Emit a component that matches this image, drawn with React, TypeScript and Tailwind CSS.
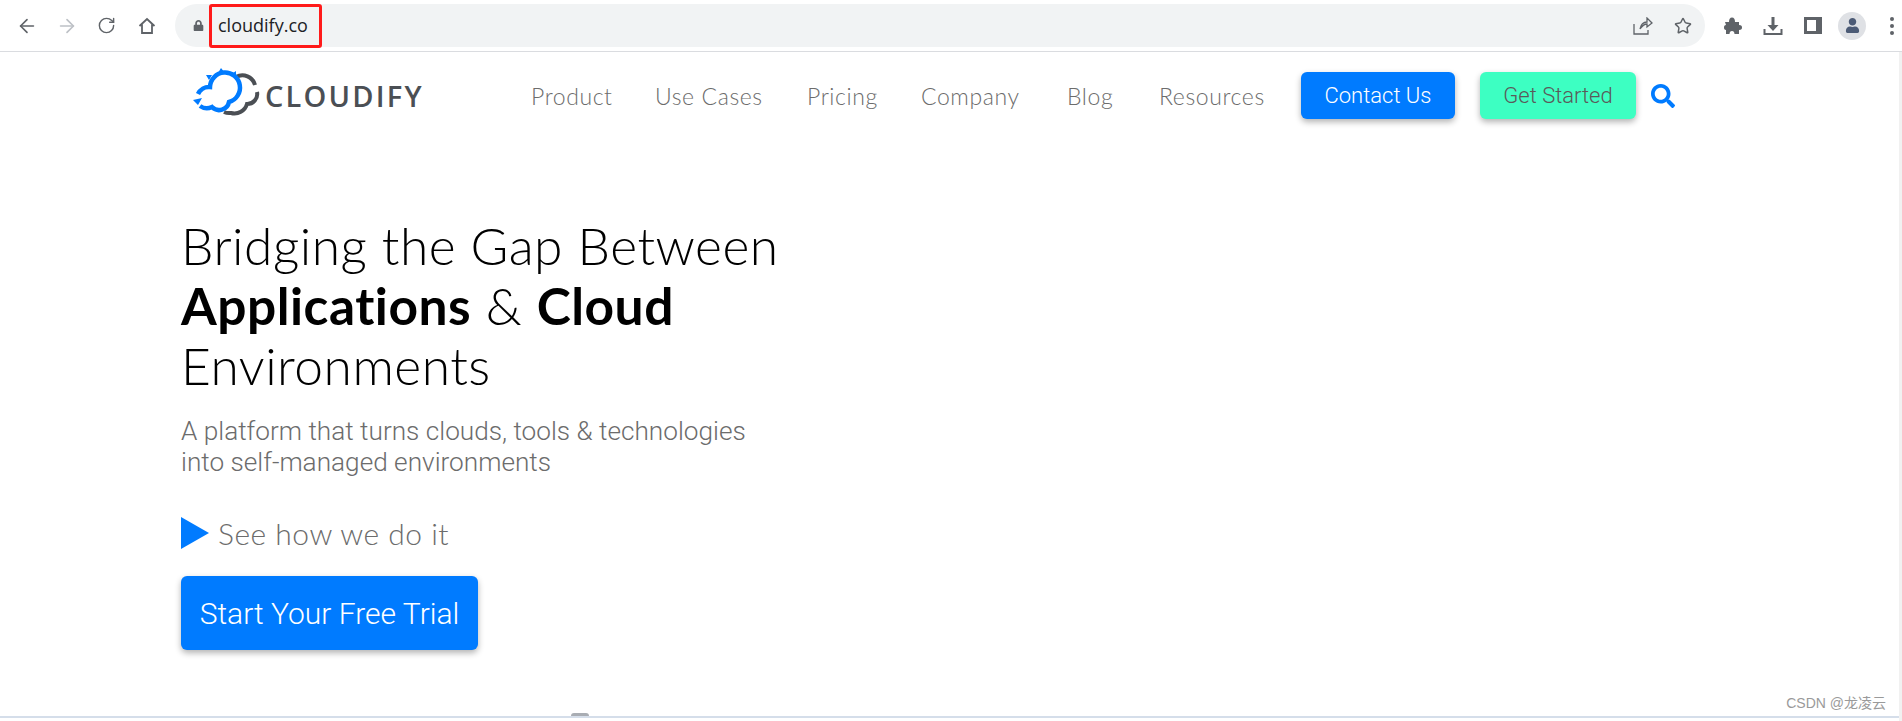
import { ArrowLeft, ArrowRight, RotateCw, Star } from 'lucide-react'
import { FaLock, FaSearch, FaUser } from 'react-icons/fa'

const navItems = [
  { label: 'Product', width: 'w-[79px]' },
  { label: 'Use Cases', width: 'w-[107px]' },
  { label: 'Pricing', width: 'w-[69px]' },
  { label: 'Company', width: 'w-[101px]' },
  { label: 'Blog', width: 'w-[47px]' },
  { label: 'Resources', width: 'w-[106px]' },
]

function Logo() {
  return (
    <div className="flex items-center">
      <svg width="68" height="50" viewBox="0 0 68 50" fill="none" className="shrink-0">
        <path d="M43 9 A13 13 0 0 1 62 17 M64 24 A10 10 0 0 1 54 36 A13 13 0 0 1 38 45 A13 13 0 0 1 31 44" stroke="#4b4f54" strokeWidth="4" />
        <path
          d="M5 26 A12 12 0 0 1 17 19 A15 15 0 1 1 36 34 A10 10 0 0 1 19 39 A12 12 0 0 1 7 38"
          stroke="#007bff"
          strokeWidth="4.500"
        />
        <path d="M25 5 l3 -5 l4 5z M37 7 l6 -4 l0 6z M16 12 l-3 -5 l6 0z M0 32 l9 -2 l-4 7z" fill="#007bff" />
      </svg>
      <span className="mt-[5px] ml-[4px] font-['Open_Sans',sans-serif] text-[29px] leading-none font-semibold tracking-[2.2px] text-[#4b4f54]">
        CLOUDIFY
      </span>
    </div>
  )
}

function BrowserBar() {
  return (
    <div className="flex h-[52px] items-start border-b border-[#dadce0] bg-white pt-1 text-[#5f6368]">
      <div className="flex h-[43px] items-center pl-[16px]">
        <ArrowLeft size={22} strokeWidth={1.8} />
        <ArrowRight size={22} strokeWidth={1.8} className="ml-[18px] text-[#bdc1c6]" />
        <RotateCw size={19} strokeWidth={1.8} className="ml-[19px]" />
        <svg width="18" height="18" viewBox="0 0 18 18" fill="none" stroke="currentColor" strokeWidth="1.8" className="ml-[22px]">
          <path d="M1.500 9 L9 2 L16.500 9 M4 7.500 V16 H14 V7.500" />
        </svg>
      </div>
      <div className="ml-[19px] flex h-[43px] w-[1530px] items-center rounded-full bg-[#f1f3f4] pl-[18px]">
        <FaLock size={11} />
        <div className="ml-[5px] flex h-[44px] w-[113px] items-center rounded-[3px] border-[3px] border-[#ff1a1a] pl-[6px] font-['Open_Sans',sans-serif] text-[18px] text-[#202124]">
          cloudify.co
        </div>
        <div className="ml-auto flex items-center gap-[21px] pr-[13px]">
          <svg width="20" height="18" viewBox="0 0 20 18" fill="none" stroke="currentColor" strokeWidth="1.3">
            <path d="M1 7 V17 H15 V13 M7 12 C8 7 11 5 14 5 V1 L19 6 L14 10 V7 C11 7 9 9 7 12Z" />
          </svg>
          <Star size={18} strokeWidth={2} />
        </div>
      </div>
      <div className="flex h-[43px] items-center pl-[19px]">
        <svg width="18" height="18" viewBox="0 0 18 18" fill="currentColor">
          <path d="M1 5 H5 C5 2 6 0.500 8 0.500 C10 0.500 11 2 11 5 H15 V8 C17.500 8 18 9 18 10.500 C18 12 17.500 13 15 13 V17 H10.500 C10.500 15 9.500 14 8 14 C6.500 14 5.500 15 5.500 17 H2 V13 C0.500 13 0 12 0 10.500 C0 9 0.500 8 2 8 Z" />
        </svg>
        <svg width="20" height="20" viewBox="0 0 20 20" fill="currentColor" className="ml-[21px]">
          <path d="M8.500 1 h3 v8 h4 L10 15 L4.500 9 h4z M0.500 13 h2 v4 h15 v-4 h2 v6 h-19z" />
        </svg>
        <div className="ml-[21px] flex h-[17px] w-[18px] justify-end border-[3px] border-r-0 border-[#5f6368] bg-white">
          <div className="h-full w-[6px] bg-[#5f6368]" />
        </div>
        <div className="ml-[16px] flex h-7 w-7 items-center justify-center rounded-full bg-[#dfe1e5] text-[#4c5b76]">
          <FaUser size={15} />
        </div>
        <div className="ml-[24px] flex flex-col gap-[3px]">
          <div className="h-[4px] w-[4px] rounded-full bg-[#5f6368]" />
          <div className="h-[4px] w-[4px] rounded-full bg-[#5f6368]" />
          <div className="h-[4px] w-[4px] rounded-full bg-[#5f6368]" />
        </div>
      </div>
    </div>
  )
}

function Header() {
  return (
    <header className="flex h-[68px] items-start pt-5">
      <div className="ml-[193px] w-[338px] -mt-[4px]">
        <Logo />
      </div>
      <nav className="flex gap-[45px] pt-[9px]">
        {navItems.map((item) => (
          <a
            key={item.label}
            className={`${item.width} whitespace-nowrap font-['Lato',sans-serif] text-[23px] leading-[30px] font-light tracking-[0.6px] text-[#6c6c6c]`}
          >
            {item.label}
          </a>
        ))}
      </nav>
      <button className="ml-[36px] h-[47px] w-[154px] rounded-md bg-[#007bff] font-['Roboto',sans-serif] text-[22px] font-light text-white shadow-[0_3px_6px_rgba(0,0,0,0.3)]">
        Contact Us
      </button>
      <button className="ml-[25px] h-[47px] w-[156px] rounded-md bg-[#3dffc2] font-['Roboto',sans-serif] text-[22px] font-light text-[#5a5a5a] shadow-[0_3px_6px_rgba(0,0,0,0.3)]">
        Get Started
      </button>
      <FaSearch size={24} className="mt-[12px] ml-[15px] text-[#007bff]" />
    </header>
  )
}

function Hero() {
  return (
    <section className="pt-[95px] pl-[181px]">
      <h1 className="font-['Lato',sans-serif] text-[51.5px] leading-[60px] font-light tracking-[0.5px] text-black">
        Bridging the Gap Between
        <br />
        <strong className="font-bold">Applications</strong> &amp; <strong className="font-bold">Cloud</strong>
        <br />
        Environments
      </h1>
      <p className="mt-[21px] font-['Roboto',sans-serif] text-[26.2px] leading-[31px] font-light text-[#6c6c6c]">
        A platform that turns clouds, tools &amp; technologies
        <br />
        into self-managed environments
      </p>
      <div className="mt-[35px] flex items-center">
        <svg width="28" height="32" viewBox="0 0 28 32" fill="#007bff">
          <path d="M0 0 L28 16 L0 32Z" />
        </svg>
        <span className="ml-[9px] font-['Lato',sans-serif] text-[30px] leading-[40px] font-light tracking-[0.5px] text-[#6c6c6c]">
          See how we do it
        </span>
      </div>
      <button className="mt-[23px] h-[74px] w-[297px] rounded-md bg-[#007bff] font-['Roboto',sans-serif] text-[30px] font-light text-white shadow-[0_3px_6px_rgba(0,0,0,0.3)]">
        Start Your Free Trial
      </button>
    </section>
  )
}

export default function App() {
  return (
    <div className="flex h-[721px] w-full flex-col overflow-hidden bg-white">
      <BrowserBar />
      <div className="flex min-h-0 flex-1">
        <div className="relative mb-[3px] flex min-w-0 flex-1 flex-col border-b-2 border-[#d5deea]">
          <Header />
          <Hero />
          <div className="mt-auto flex justify-end pr-[13px] pb-[4px] font-['Liberation_Sans','Noto_Sans_CJK_SC',sans-serif] text-[14px] leading-[18px] text-[#9a9a9a]">
            CSDN @龙凌云
          </div>
          <div className="absolute bottom-0 left-[571px] h-[3px] w-[18px] rounded-t-full bg-[#a9adb3]" />
        </div>
        <div className="w-[3px] bg-[#f1f1f1]" />
      </div>
    </div>
  )
}
